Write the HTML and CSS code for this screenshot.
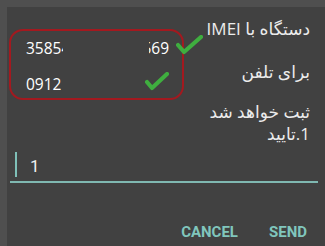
FILE: index.html
```html
<!DOCTYPE html>
<html>
<head>
<meta charset="utf-8">
<link rel="stylesheet" href="styles.css">
</head>
<body>
<div class="dialog">
  <div class="message">
    <div class="annot">
      <div class="row row1">
        <span class="num clip1">35854</span>
        <span class="num clip2"><span>569</span></span>
        <svg class="check c1" width="27" height="20" viewBox="0 0 27 20"><polyline points="2,10 8,17 25,2" fill="none" stroke="#3fae3f" stroke-width="4.2" stroke-linecap="round" stroke-linejoin="round"/></svg>
      </div>
      <div class="row row2">
        <span class="num clip3">0912</span>
        <svg class="check c2" width="24" height="19" viewBox="0 0 24 19"><polyline points="2,10 7,16 22,2" fill="none" stroke="#3fae3f" stroke-width="4.2" stroke-linecap="round" stroke-linejoin="round"/></svg>
      </div>
    </div>
    <div class="lines">
      <div class="line l1" dir="rtl">دستگاه با IMEI</div>
      <div class="line l2" dir="rtl">برای تلفن</div>
      <div class="line l3" dir="rtl">ثبت خواهد شد</div>
      <div class="line l4" dir="rtl">1.تایید</div>
    </div>
  </div>
  <div class="input">
    <span class="cursor"></span>
    <span class="value">1</span>
  </div>
  <div class="buttons">
    <span class="btn">CANCEL</span>
    <span class="btn">SEND</span>
  </div>
</div>
</body>
</html>
```
FILE: styles.css
```css
html, body {
  margin: 0;
  padding: 0;
  width: 325px;
  height: 246px;
  overflow: hidden;
  background: #4f4f4f;
}
.dialog {
  margin: 7px 0 0 7px;
  height: 239px;
  background: #414141;
  box-sizing: border-box;
  padding-right: 15px;
  font-family: "Open Sans", "DejaVu Sans", sans-serif;
  color: #ececec;
}
.message {
  display: flex;
  align-items: flex-start;
}
.annot {
  margin-left: 2px;
  margin-top: 22px;
  width: 175px;
  height: 71px;
  flex: none;
  box-sizing: border-box;
  border: 2.5px solid #a3191f;
  border-radius: 14px;
}
.row {
  display: flex;
  align-items: flex-start;
  height: 20px;
}
.row1 { margin-top: 7px; }
.row2 { margin-top: 16px; }
.num {
  flex: none;
  font-family: "Open Sans", sans-serif;
  font-size: 15.5px;
  line-height: 20px;
  color: #ffffff;
  white-space: nowrap;
  overflow: hidden;
  display: inline-block;
}
.clip1 { margin-left: 15px; width: 37px; }
.clip2 {
  margin-left: 86px;
  width: 20px;
  direction: rtl;
  text-align: left;
}
.clip2 span { direction: ltr; unicode-bidi: isolate; }
.clip3 { margin-left: 15px; width: 38px; }
.check { display: block; flex: none; }
.c1 { margin-left: 7px; margin-top: -3.5px; }
.c2 { margin-left: 81px; margin-top: -2px; }
.lines {
  flex: 1;
  text-align: right;
  font-size: 17px;
  line-height: 20px;
}
.line { white-space: nowrap; }
.l1 { margin-top: 12px; }
.l2 { margin-top: 23px; }
.l3 { margin-top: 20px; }
.l4 { margin-top: 2px; }
.input {
  display: flex;
  align-items: flex-start;
  margin: 8px -8px 0 3px;
  height: 29px;
  border-bottom: 2px solid #7fb8b1;
}
.cursor {
  display: block;
  width: 2px;
  height: 25px;
  margin-left: 5px;
  background: #7fc0b8;
}
.value {
  margin-left: 13px;
  margin-top: 4px;
  font-family: Roboto, sans-serif;
  font-size: 17px;
  line-height: 20px;
  color: #f0f0f0;
}
.buttons {
  display: flex;
  justify-content: flex-end;
  gap: 31px;
  margin-top: 40px;
  margin-right: 3px;
}
.btn {
  font-family: Roboto, sans-serif;
  font-weight: 700;
  font-size: 15px;
  line-height: 18px;
  color: #80c6bd;
}
```
